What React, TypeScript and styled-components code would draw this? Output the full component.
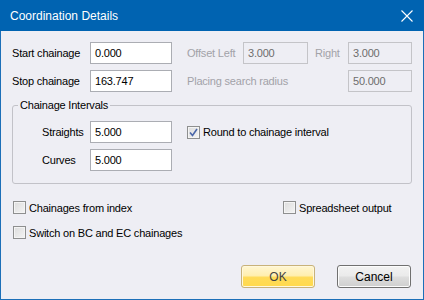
import React from "react";
import styled, { createGlobalStyle } from "styled-components";

const Global = createGlobalStyle`
  html, body { margin: 0; padding: 0; background: #eeeef4; }
  * { box-sizing: border-box; }
`;

const FONT = `"Liberation Sans", Arial, sans-serif`;

const Window = styled.div`
  width: 424px;
  height: 300px;
  display: flex;
  flex-direction: column;
  background: #eeeef4;
  border: 1px solid #1c6fb8;
  border-top: none;
  font-family: ${FONT};
  font-size: 11px;
  letter-spacing: -0.2px;
  color: #000;
`;

const TitleBar = styled.div`
  height: 31px;
  margin: 0 -1px;
  background: #0063b1;
  display: flex;
  align-items: center;
  justify-content: space-between;
  padding: 0 10px 0 10px;
  color: #fff;
  font-size: 12px;
  letter-spacing: 0;
`;

const CloseBtn = styled.div`
  width: 12px;
  height: 12px;
  margin-right: 1px;
  display: flex;
`;

const Body = styled.div`
  flex: 1;
  display: flex;
  flex-direction: column;
  padding: 11px 11px 0 11px;
`;

const TopGrid = styled.div`
  display: grid;
  grid-template-columns: 78px 97px 56px 72px 33px 64px;
  grid-auto-rows: 22px;
  row-gap: 6px;
  align-items: center;
`;

const Label = styled.span<{ $disabled?: boolean; $span?: number }>`
  color: ${(p) => (p.$disabled ? "#a2a2a8" : "#000")};
  white-space: nowrap;
  ${(p) => (p.$span ? `grid-column: span ${p.$span};` : "")}
`;

const Input = styled.div<{ $w: number; $disabled?: boolean }>`
  width: ${(p) => p.$w}px;
  height: 22px;
  border: 1px solid ${(p) => (p.$disabled ? "#c4c4c8" : "#abadb3")};
  background: ${(p) => (p.$disabled ? "#eeeef4" : "#fff")};
  color: ${(p) => (p.$disabled ? "#6d6d6d" : "#000")};
  padding: 0 0 0 4px;
  display: flex;
  align-items: center;
`;

const Group = styled.fieldset`
  margin: 7px 0 0 0;
  padding: 10px 0 12px 0;
  width: 400px;
  border: 1px solid #c2c2c8;
  border-radius: 3px;
`;

const Legend = styled.legend`
  padding: 0 2px;
  margin-left: 5px;
  font-size: 11px;
`;

const GroupGrid = styled.div`
  display: grid;
  padding-left: 29px;
  grid-template-columns: 48px 97px auto;
  grid-auto-rows: 22px;
  row-gap: 6px;
  align-items: center;
`;

const CheckRow = styled.label`
  display: flex;
  align-items: center;
  gap: 3px;
  white-space: nowrap;
`;

const Box = styled.span`
  width: 13px;
  height: 13px;
  border: 1px solid #8e8f8f;
  background: linear-gradient(135deg, #dcdcdc 0%, #f4f4f4 100%);
  box-shadow: inset 0 0 0 1px #f4f4f4;
  display: flex;
  align-items: center;
  justify-content: center;
  flex: none;
`;

const Options = styled.div`
  margin-top: 17px;
  padding-left: 1px;
  display: grid;
  grid-template-columns: 270px auto;
  grid-auto-rows: 13px;
  row-gap: 12px;
`;

const Footer = styled.div`
  margin-top: auto;
  margin-bottom: 11px;
  margin-right: 1px;
  display: flex;
  justify-content: flex-end;
  gap: 22px;
`;

const Button = styled.div<{ $primary?: boolean }>`
  width: 74px;
  height: 23px;
  border-radius: 3px;
  display: flex;
  align-items: center;
  justify-content: center;
  border: 1px solid ${(p) => (p.$primary ? "#c8b27a" : "#707070")};
  background: ${(p) =>
    p.$primary
      ? "linear-gradient(#fff6d2 0%, #ffefb0 45%, #ffdb58 55%, #ffd94c 100%)"
      : "linear-gradient(#f2f2f2 0%, #ebebeb 45%, #dddddd 55%, #cfcfcf 100%)"};
  box-shadow: inset 0 0 0 1px ${(p) => (p.$primary ? "#fff8dc" : "#fcfcfc")};
  color: ${(p) => (p.$primary ? "#444" : "#000")};
  font-size: 12px;
  letter-spacing: 0;
`;

const Check = ({ checked }: { checked?: boolean }) => (
  <Box>
    {checked && (
      <svg width="9" height="9" viewBox="0 0 9 9">
        <path d="M1 4.5 L3.5 7.5 L8 1" fill="none" stroke="#4a66a8" strokeWidth="1.6" />
      </svg>
    )}
  </Box>
);

export default function App() {
  return (
    <>
      <Global />
      <Window>
        <TitleBar>
          <span>Coordination Details</span>
          <CloseBtn>
            <svg width="12" height="12" viewBox="0 0 12 12">
              <path d="M0.5 0.5 L11.5 11.5 M11.5 0.5 L0.5 11.5" stroke="#fff" strokeWidth="1.1" />
            </svg>
          </CloseBtn>
        </TitleBar>
        <Body>
          <TopGrid>
            <Label>Start chainage</Label>
            <Input $w={82}>0.000</Input>
            <Label $disabled>Offset Left</Label>
            <Input $w={65} $disabled>3.000</Input>
            <Label $disabled>Right</Label>
            <Input $w={64} $disabled>3.000</Input>
            <Label>Stop chainage</Label>
            <Input $w={82}>163.747</Input>
            <Label $disabled $span={3}>Placing search radius</Label>
            <Input $w={64} $disabled>50.000</Input>
          </TopGrid>
          <Group>
            <Legend>Chainage Intervals</Legend>
            <GroupGrid>
              <Label>Straights</Label>
              <Input $w={82}>5.000</Input>
              <CheckRow>
                <Check checked />
                Round to chainage interval
              </CheckRow>
              <Label>Curves</Label>
              <Input $w={82}>5.000</Input>
            </GroupGrid>
          </Group>
          <Options>
            <CheckRow>
              <Check />
              Chainages from index
            </CheckRow>
            <CheckRow>
              <Check />
              Spreadsheet output
            </CheckRow>
            <CheckRow>
              <Check />
              Switch on BC and EC chainages
            </CheckRow>
          </Options>
          <Footer>
            <Button $primary>OK</Button>
            <Button>Cancel</Button>
          </Footer>
        </Body>
      </Window>
    </>
  );
}
